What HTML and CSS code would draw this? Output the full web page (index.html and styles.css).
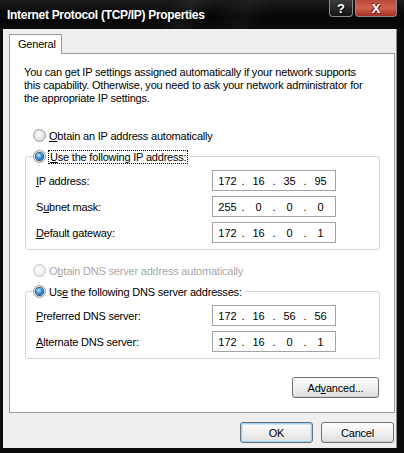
FILE: index.html
```html
<!DOCTYPE html>
<html lang="en">
<head>
    <meta charset="UTF-8">
    <title>Internet Protocol (TCP/IP) Properties</title>
    <link rel="stylesheet" href="styles.css">
</head>
<body>
    <div class="window">
        <div class="titlebar">
            <span class="title">Internet Protocol (TCP/IP) Properties</span>
            <div class="caption-buttons">
                <span class="cap-btn help">?</span>
                <span class="cap-btn close">X</span>
            </div>
        </div>
        <div class="client">
            <div class="tabs"><span class="tab active">General</span></div>
            <div class="tab-panel">
                <p class="intro">You can get IP settings assigned automatically if your network supports<br>this capability. Otherwise, you need to ask your network administrator for<br>the appropriate IP settings.</p>

                <div class="radio-row first"><span class="radio"></span><span><u>O</u>btain an IP address automatically</span></div>
                <fieldset class="group">
                    <legend class="radio-row"><span class="radio checked"></span><span class="focus"><u>U</u>se the following IP address:</span></legend>
                    <div class="field-row">
                        <span class="field-label"><u>I</u>P address:</span>
                        <div class="ip"><span>172</span><i>.</i><span>16</span><i>.</i><span>35</span><i>.</i><span>95</span></div>
                    </div>
                    <div class="field-row">
                        <span class="field-label">S<u>u</u>bnet mask:</span>
                        <div class="ip"><span>255</span><i>.</i><span>0</span><i>.</i><span>0</span><i>.</i><span>0</span></div>
                    </div>
                    <div class="field-row">
                        <span class="field-label"><u>D</u>efault gateway:</span>
                        <div class="ip"><span>172</span><i>.</i><span>16</span><i>.</i><span>0</span><i>.</i><span>1</span></div>
                    </div>
                </fieldset>

                <div class="radio-row disabled"><span class="radio"></span><span>O<u>b</u>tain DNS server address automatically</span></div>
                <fieldset class="group">
                    <legend class="radio-row"><span class="radio checked"></span><span>Us<u>e</u> the following DNS server addresses:</span></legend>
                    <div class="field-row">
                        <span class="field-label"><u>P</u>referred DNS server:</span>
                        <div class="ip"><span>172</span><i>.</i><span>16</span><i>.</i><span>56</span><i>.</i><span>56</span></div>
                    </div>
                    <div class="field-row">
                        <span class="field-label"><u>A</u>lternate DNS server:</span>
                        <div class="ip"><span>172</span><i>.</i><span>16</span><i>.</i><span>0</span><i>.</i><span>1</span></div>
                    </div>
                </fieldset>

                <div class="advanced-row">
                    <button class="btn advanced">Ad<u>v</u>anced...</button>
                </div>
            </div>
            <div class="dialog-buttons">
                <button class="btn default">OK</button>
                <button class="btn">Cancel</button>
            </div>
        </div>
    </div>
</body>
</html>
```

FILE: styles.css
```css
* {
    box-sizing: border-box;
}
body {
    margin: 0;
    background: #000;
    font-family: "Liberation Sans", Arial, sans-serif;
    font-size: 11px;
    letter-spacing: -0.2px;
    color: #000;
}
.window {
    width: 404px;
    height: 453px;
    display: flex;
    flex-direction: column;
    background: #0c0c0c;
}
.titlebar {
    height: 29px;
    display: flex;
    justify-content: space-between;
    align-items: flex-start;
    padding: 0 7px 0 7px;
    background:
        linear-gradient(115deg, transparent 0 40%, rgba(255,255,255,0.05) 46%, transparent 52%, rgba(255,255,255,0.04) 60%, transparent 66%),
        linear-gradient(180deg, #1a1a1a, #050505 60%, #0a0a0a);
}
.title {
    color: #fff;
    font-weight: bold;
    font-size: 12px;
    letter-spacing: -0.3px;
    line-height: 29px;
    margin-top: 1px;
}
.caption-buttons {
    display: flex;
    gap: 2px;
}
.cap-btn {
    height: 17px;
    display: flex;
    align-items: center;
    justify-content: center;
    border: 1px solid #8a8a8a;
    border-top: none;
    border-radius: 0 0 4px 4px;
    color: #fff;
    font-weight: bold;
    font-size: 13px;
    letter-spacing: 0;
    text-shadow: 1px 1px 0 #000, -1px 0 0 #333;
}
.help {
    width: 24px;
    background: linear-gradient(180deg, #3c3c3c, #151515);
}
.close {
    width: 42px;
    background: linear-gradient(180deg, #b8473a, #d0604c 50%, #a52e22);
    text-shadow: 1px 1px 0 #6a1c14, -1px -1px 0 #7a2418;
}
.client {
    flex: 1;
    margin: 0 7px 5px 3px;
    padding: 5px 1px 0 6px;
    background: #efefef;
    border-right: 1px solid #8c8c8c;
}
.tabs {
    display: flex;
    height: 19px;
}
.tab {
    width: 53px;
    height: 20px;
    border: 1px solid #9a9a9a;
    border-bottom: none;
    background: #fff;
    padding: 3px 0 0 8px;
    position: relative;
    z-index: 1;
}
.tab-panel {
    height: 360px;
    border: 1px solid #9a9a9a;
    background: #fff;
    padding: 12px 14px 0 14px;
}
.intro {
    margin: 0;
    line-height: 13px;
    white-space: nowrap;
}
.radio-row {
    display: flex;
    align-items: center;
    height: 15px;
    padding-left: 9px;
}
.radio-row.first {
    margin-top: 23px;
}
.radio-row.disabled {
    margin-top: 13px;
    color: #a8a8a8;
}
.radio {
    width: 13px;
    height: 13px;
    border-radius: 50%;
    border: 1px solid #9c9c9c;
    background: radial-gradient(circle at 45% 40%, #fff 0, #e8e8e8 45%, #c8c8c8 100%);
    margin-right: 3px;
    display: flex;
    align-items: center;
    justify-content: center;
}
.radio.checked::after {
    content: "";
    width: 7px;
    height: 7px;
    border-radius: 50%;
    background: radial-gradient(circle at 40% 35%, #c8f0ff 0, #4aa8ec 35%, #1255b4 80%);
    box-shadow: 0 0 0 1px #2a4f7a;
}
.disabled .radio {
    border-color: #c8c8c8;
    background: radial-gradient(circle at 45% 40%, #fff 0, #f0f0f0 50%, #dcdcdc 100%);
}
.focus {
    outline: 1px dotted #000;
    outline-offset: 0;
    padding: 0 1px;
}
.group {
    margin: 6px 0 0 1px;
    padding: 6px 10px 6px 7px;
    border: 1px solid #d4d4d4;
    border-radius: 3px;
}
.group legend {
    padding: 0 3px 0 0;
    margin: 0;
}
.field-row {
    display: flex;
    align-items: center;
    height: 21px;
    padding-left: 3px;
}
.field-row + .field-row {
    margin-top: 5px;
}
.field-label {
    width: 176px;
}
.ip {
    width: 124px;
    height: 21px;
    border: 1px solid #a4a4a4;
    background: #fff;
    display: flex;
    align-items: center;
    padding-left: 1px;
    letter-spacing: 0;
}
.ip span {
    width: 27px;
    text-align: center;
}
.ip i {
    width: 4px;
    font-style: normal;
    text-align: center;
}
.advanced-row {
    display: flex;
    justify-content: flex-end;
    margin-top: 18px;
    padding-right: 1px;
}
.btn {
    height: 21px;
    font-family: inherit;
    font-size: 11px;
    letter-spacing: inherit;
    color: #000;
    border: 1px solid #707070;
    border-radius: 3px;
    background: linear-gradient(180deg, #fdfdfd, #f0f0f0 50%, #dedede);
    box-shadow: inset 0 -1px 0 #cfcfcf;
    padding: 0;
}
.advanced {
    width: 87px;
}
.dialog-buttons {
    display: flex;
    justify-content: flex-end;
    gap: 8px;
    margin-top: 9px;
    padding-right: 1px;
}
.dialog-buttons .btn {
    width: 73px;
}
.btn.default {
    box-shadow: inset 0 0 0 1px #9fd0f5, inset 0 0 0 2px #cfe8fa;
}
```
